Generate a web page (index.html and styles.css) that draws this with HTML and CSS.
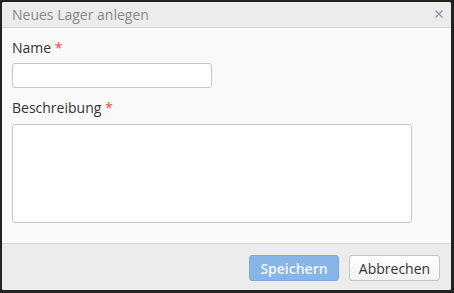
FILE: index.html
```html
<!DOCTYPE html>
<html lang="de">
<head>
<meta charset="utf-8">
<link rel="stylesheet" href="styles.css">
</head>
<body>
<div class="dialog">
  <div class="header">
    <span class="title">Neues Lager anlegen</span>
    <svg class="close" width="8" height="8" viewBox="0 0 8 8" aria-label="Schließen"><path d="M0.5 0.5 L7.5 7.5 M7.5 0.5 L0.5 7.5" stroke="#8a96aa" stroke-width="1.3" fill="none"/></svg>
  </div>
  <div class="content">
    <label class="label">Name <span class="req">*</span></label>
    <input class="input" type="text">
    <label class="label label-2">Beschreibung <span class="req">*</span></label>
    <textarea class="textarea"></textarea>
  </div>
  <div class="footer">
    <button class="btn btn-primary">Speichern</button>
    <button class="btn btn-default">Abbrechen</button>
  </div>
</div>
</body>
</html>
```
FILE: styles.css
```css
html, body {
  margin: 0;
  padding: 0;
  background: #222222;
  font-family: "Open Sans", "DejaVu Sans", sans-serif;
}
.dialog {
  margin: 2px 3px 3px 2px;
  width: 449px;
  height: 288px;
  background: #f9f9f9;
  border-radius: 2px;
  display: flex;
  flex-direction: column;
  overflow: hidden;
}
.header {
  height: 26px;
  box-sizing: border-box;
  border-bottom: 1px solid #d4d4d4;
  background: #ececec;
  display: flex;
  align-items: center;
  justify-content: space-between;
  padding: 0 8px 0 10px;
  flex: none;
}
.title {
  font-size: 14px;
  color: #888888;
  line-height: 19px;
}
.close {
  display: block;
  margin-top: -1px;
}
.content {
  flex: 1;
  display: flex;
  flex-direction: column;
  align-items: flex-start;
  padding: 10px 0 0 10px;
}
.label {
  font-size: 14px;
  line-height: 19px;
  color: #333333;
}
.label-2 {
  margin-top: 10px;
}
.req {
  color: #e5484d;
}
.input {
  margin-top: 6px;
  width: 200px;
  height: 25px;
  box-sizing: border-box;
  border: 1px solid #c6c6c6;
  border-radius: 3px;
  background: #ffffff;
  padding: 0 6px;
}
.textarea {
  margin-top: 7px;
  width: 400px;
  height: 99px;
  box-sizing: border-box;
  border: 1px solid #c6c6c6;
  border-radius: 3px;
  background: #ffffff;
  resize: none;
  padding: 4px 6px;
}
.footer {
  height: 47px;
  box-sizing: border-box;
  flex: none;
  border-top: 1px solid #d8d8d8;
  background: #ececec;
  display: flex;
  justify-content: flex-end;
  align-items: flex-start;
  gap: 10px;
  padding: 11px 11px 0 0;
}
.btn {
  height: 26px;
  box-sizing: border-box;
  border-radius: 3px;
  font-family: "Open Sans", "DejaVu Sans", sans-serif;
  font-size: 14px;
  padding: 0;
}
.btn-primary {
  width: 90px;
  background: #86b5e6;
  border: 1px solid #7aaade;
  color: #eef5fc;
  font-weight: 600;
}
.btn-default {
  width: 91px;
  background: linear-gradient(#ffffff, #f2f2f2);
  border: 1px solid #c4c4c4;
  color: #333333;
}
```
